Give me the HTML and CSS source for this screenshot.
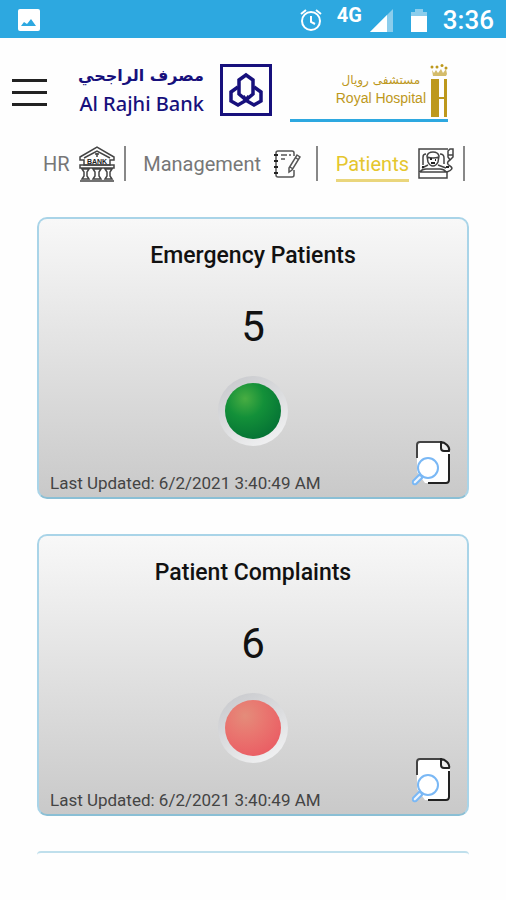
FILE: index.html
```
<!DOCTYPE html>
<html lang="en">
<head>
	<meta charset="UTF-8">
	<meta name="viewport" content="width=device-width, initial-scale=1">
	<title>Royal Hospital - Patients</title>
	<link rel="stylesheet" href="styles.css">
</head>
<body>
	<!-- shared icons -->
	<svg class="defs" width="0" height="0" aria-hidden="true">
		<symbol id="details" viewBox="0 0 42 46">
			<path d="M8 2h23l8 9v30q0 2-2 2H14L6 32V4q0-2 2-2z" fill="#fff"/>
			<path d="M6 18V5q0-3 3-3h22" fill="none" stroke="#444" stroke-width="2"/>
			<path d="M30 2v6q0 3 3 3h5q1-3-2-6t-6-3z" fill="#eee" stroke="#222" stroke-width="2"/>
			<path d="M38 14v26q0 3-3 3H17" fill="none" stroke="#222" stroke-width="2"/>
			<circle cx="17" cy="28" r="10" fill="#fff" stroke="#7ab8f5" stroke-width="2"/>
			<path d="M8 35l-6 6q-1 4 3 3l6-6q0-3-3-3z" fill="#eef6ff" stroke="#7ab8f5" stroke-width="2"/>
		</symbol>
	</svg>

	<div class="status">
		<svg class="photo" width="22" height="22" viewBox="0 0 22 22">
			<rect width="22" height="22" rx="2" fill="#fff"/>
			<path d="M3 17l3-4 3 2 4-5 5 7z" fill="#2da8e0"/>
		</svg>
		<svg class="alarm" width="24" height="24" viewBox="0 0 24 24" fill="none" stroke="#fff" stroke-width="2">
			<circle cx="12" cy="13" r="9"/>
			<path d="M12 8v6l4 2M2 6l5-4M22 6l-5-4"/>
		</svg>
		<span class="net">4G</span>
		<svg class="signal" width="23" height="23" viewBox="0 0 23 23">
			<path d="M0 23L23 0v23z" fill="#8bcdec"/>
			<path d="M0 23L17 6v17z" fill="#fff"/>
		</svg>
		<svg class="battery" width="16" height="23" viewBox="0 0 16 23">
			<path d="M4 0h8v3h4v5H0V3h4z" fill="#8bcdec"/>
			<path d="M0 7h16v16H0z" fill="#fff"/>
		</svg>
		<span class="time">3:36</span>
	</div>

	<header>
		<button type="button" class="menu" aria-label="Menu"><i></i><i></i><i></i></button>
		<a href="#" class="bank">
			<span class="bank-name">
				<span class="bank-ar" lang="ar" dir="rtl">مصرف الراجحي</span>
				<span class="bank-en">Al Rajhi Bank</span>
			</span>
			<svg width="52" height="52" viewBox="0 0 52 52" fill="none" stroke="#17107c">
				<rect x="1.500" y="1.500" width="49" height="49" stroke-width="3"/>
				<path d="M26 11l7 5v14l-7 6-7-6V16z" stroke-width="3.500"/>
				<path d="M18 23l-7 5v9l7 4 7-4 4-5M34 23l7 5v9l-7 4-7-4-4-5" stroke-width="3.500"/>
			</svg>
		</a>
		<a href="#" class="hospital">
			<span class="hospital-name">
				<span class="hospital-ar" lang="ar" dir="rtl">مستشفى رويال</span>
				<span class="hospital-en">Royal Hospital</span>
			</span>
			<svg width="18" height="54" viewBox="0 0 18 54" fill="#bd981c">
				<path d="M2 6l2 3 2-3 2 3 3-4 2 4 3-4 1 5-1 2H3z" opacity=".65"/>
				<circle cx="2" cy="3" r="1.500"/><circle cx="7" cy="3" r="1.500"/><circle cx="12" cy="1.500" r="1.500"/><circle cx="16" cy="4" r="1.500"/>
				<path d="M1 15h8v18h5V15h3v38h-3V35H9v18H1z"/>
			</svg>
		</a>
	</header>

	<nav>
		<a href="#" class="tab">
			<span>HR</span>
			<svg width="36" height="36" viewBox="0 0 36 36" fill="none" stroke="#444" stroke-width="1.500">
				<path d="M1 11L18 1l17 10v3h-4v5H5v-5H1zM5 12L18 5l13 7"/>
				<path d="M16 8h4M18 7v4"/>
				<path d="M1 19h34v3H1zM3 23h7l-2 3v4l2 3H3l2-3v-4zM14 23h8l-2 3v4l2 3h-8l2-3v-4zM26 23h7l-2 3v4l2 3h-7l2-3v-4zM1 35h34"/>
				<text x="18" y="18" class="bank-sign">BANK</text>
			</svg>
		</a>
		<a href="#" class="tab wide">
			<span>Management</span>
			<svg width="28" height="28" viewBox="0 0 28 28" fill="none" stroke="#555" stroke-width="1.500">
				<path d="M21 6V3q0-2-2-2H5Q3 1 3 3v22q0 2 2 2h14q2 0 2-2v-5M8 5h6M16 5h2M8 9h4"/>
				<path d="M1 5h4M1 11h4M1 17h4M1 23h4" stroke="#222" stroke-width="2"/>
				<path d="M24 5l3 2-8 13-3 2v-4zM23 8l3 2M17 17l3 2"/>
			</svg>
		</a>
		<a href="#" class="tab on">
			<span>Patients</span>
			<svg width="36" height="31" viewBox="0 0 36 31" fill="none" stroke="#444" stroke-width="1.500">
				<path d="M30 1H1v29h28v-7M2 24q2-3 6-3h14q4 0 6 3M2 24h27"/>
				<path d="M9 8q1-4 6-4t6 4l-1 6q-2 4-5 4t-5-4zM9 9q6 2 12 0M10 17l-6 3M20 17l8 3M5 17V9q0-3 3-3M22 6q4 0 4 4v6"/>
				<path d="M32 1h3v8l-3 3-2-3V3zM30 7h5M32 12q-5 3 0 6t-3 6"/>
				<path d="M12 11h2M17 12h1M13 15h4M4 19h2M28 19h3" stroke="#222" stroke-width="2"/>
			</svg>
		</a>
	</nav>

	<main>
		<section class="card">
			<h2>Emergency Patients</h2>
			<p class="count">5</p>
			<div class="light green"></div>
			<footer>
				<span>Last Updated: 6/2/2021 3:40:49 AM</span>
				<button type="button" aria-label="Details"><svg width="42" height="46"><use href="#details"/></svg></button>
			</footer>
		</section>
		<section class="card">
			<h2>Patient Complaints</h2>
			<p class="count">6</p>
			<div class="light red"></div>
			<footer>
				<span>Last Updated: 6/2/2021 3:40:49 AM</span>
				<button type="button" aria-label="Details"><svg width="42" height="46"><use href="#details"/></svg></button>
			</footer>
		</section>
		<div class="next"></div>
	</main>
</body>
</html>
```
FILE: styles.css
```
*{padding:0; margin:0; box-sizing:border-box;}
body{background:#fefefe; font-family:Roboto,"Noto Sans",sans-serif; color:#111;}
a{text-decoration:none; color:inherit;}
button{border:0; background:none; cursor:pointer;}
svg{display:block; flex:none;}
.defs{position:absolute;}

.status{display:flex; align-items:center; height:38px; padding:2px 12px 0 18px; background:#2da8e0; color:#fff;}
.photo{margin-right:auto;}
.net{margin:0 8px 10px 14px; font-size:20px; line-height:20px; font-weight:700;}
.battery{margin:0 16px 0 18px;}
.time{font-size:26px; line-height:34px; font-weight:500;}

header{display:flex; align-items:center; height:90px; padding:0 58px 0 12px;}
.menu{display:flex; flex-direction:column; gap:9px; width:35px; margin-top:18px;}
.menu i{height:3px; background:#222;}
.bank{display:flex; align-items:center; gap:16px; margin:14px 0 0 31px; color:#17107c; white-space:nowrap;}
.bank-name{display:flex; flex-direction:column; align-items:flex-end;}
.bank-ar{font:700 16px/28px "DejaVu Sans",sans-serif;}
.bank-en{font:500 20px/28px "Noto Sans",sans-serif;}
.hospital{display:flex; flex:1; justify-content:flex-end; gap:4px; height:58px; margin:20px 0 0 18px; border-bottom:3px solid #2da8e0; color:#bd981c; white-space:nowrap;}
.hospital-name{display:flex; flex-direction:column; align-items:center; padding-top:7px;}
.hospital-ar{font:12px/18px "DejaVu Sans",sans-serif;}
.hospital-en{font:14px/18px "Liberation Sans",sans-serif;}

nav{display:flex; justify-content:space-between; padding:18px 41px 0 43px;}
.tab{display:flex; align-items:center; gap:9px; height:35px; padding-right:9px; border-right:2px solid #888; font-size:20px; line-height:30px; color:#777;}
.tab span{border-bottom:3px solid transparent; padding-top:3px;}
.wide{gap:12px; padding-right:15px;}
.on{color:#e5c62d;}
.on span{border-color:#ead67c;}
.bank-sign{font:700 7px "Liberation Sans",sans-serif; text-anchor:middle; fill:#222; stroke:none;}

main{display:flex; flex-direction:column; gap:35px; padding:36px 37px 0;}
.card{display:flex; flex-direction:column; align-items:center; padding:20px 11px 3px; border:2px solid #a9d4e8; border-bottom-color:#8abfd5; border-radius:10px; background:linear-gradient(#f8f8f8,#c9c9c9);}
h2{font-size:23px; line-height:34px; font-weight:500;}
.count{margin-top:29px; font-size:42px; line-height:50px;}
.light{width:70px; height:70px; margin-top:24px; border:7px solid transparent; border-radius:50%;}
.green{background:radial-gradient(circle at 36% 28%,#48ad42,#139039 35%,#067535 75%,#056a2e) padding-box,linear-gradient(150deg,#c6c7cb,#dcdddf 50%,#f6f6f7) border-box;}
.red{background:radial-gradient(circle at 36% 28%,#e48c7a,#e97770 35%,#ea6065 75%,#e0585c) padding-box,linear-gradient(150deg,#c6c7cb,#dcdddf 50%,#f6f6f7) border-box;}
.card footer{display:flex; align-items:flex-end; justify-content:space-between; align-self:stretch; margin-top:-6px; font-size:17px; line-height:22px; color:#444;}
.card footer button{margin:0 3px 8px 0;}
.next{height:4px; border-top:2px solid #bfdfec; border-radius:10px 10px 0 0;}
```
